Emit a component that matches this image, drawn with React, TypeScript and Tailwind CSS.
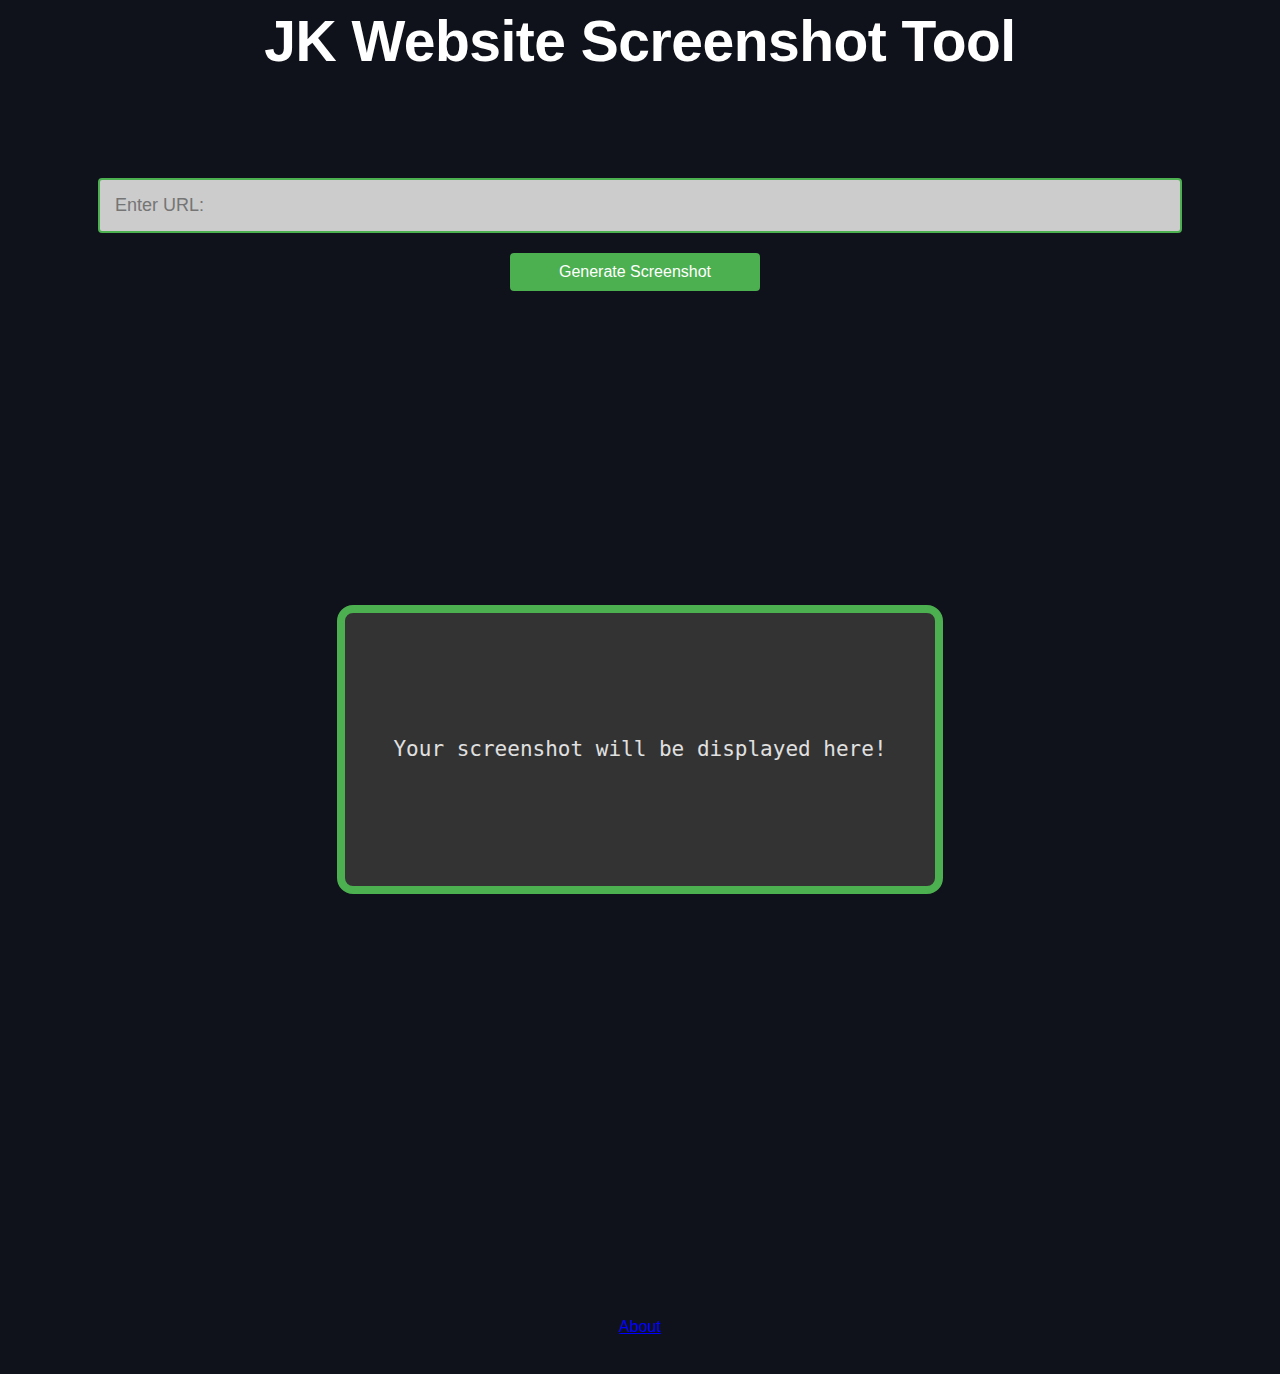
import React from 'react';

export default function App() {
  return (
    <div className="min-h-[1374px] bg-[#10121b] flex flex-col items-center" style={{ fontFamily: '"Liberation Sans", Arial, sans-serif' }}>
      <h1 className="text-[57px] font-bold text-white leading-none tracking-[-0.5px] mt-[13px]">JK Website Screenshot Tool</h1>

      <input
        type="text"
        placeholder="Enter URL:"
        className="mt-[108px] w-[1084px] h-[55px] bg-[#cccccc] border-2 border-[#4caf50] rounded-[4px] px-[15px] text-[18px] text-[#333] placeholder:text-[#757575] outline-none"
      />

      <button className="mt-[20px] mr-[10px] w-[250px] h-[38px] bg-[#4caf50] text-white text-[16px] rounded-[4px]">
        Generate Screenshot
      </button>

      <div className="mt-[314px] w-[606px] h-[289px] bg-[#333333] border-[8px] border-[#4caf50] rounded-[16px] flex items-center justify-center">
        <p className="text-[21px] text-[#e0e0e0] mt-[1px]" style={{ fontFamily: '"DejaVu Sans Mono", monospace' }}>
          Your screenshot will be displayed here!
        </p>
      </div>

      <a href="#" className="mt-[421px] text-[16px] text-[#0000ff] underline">About</a>
    </div>
  );
}
